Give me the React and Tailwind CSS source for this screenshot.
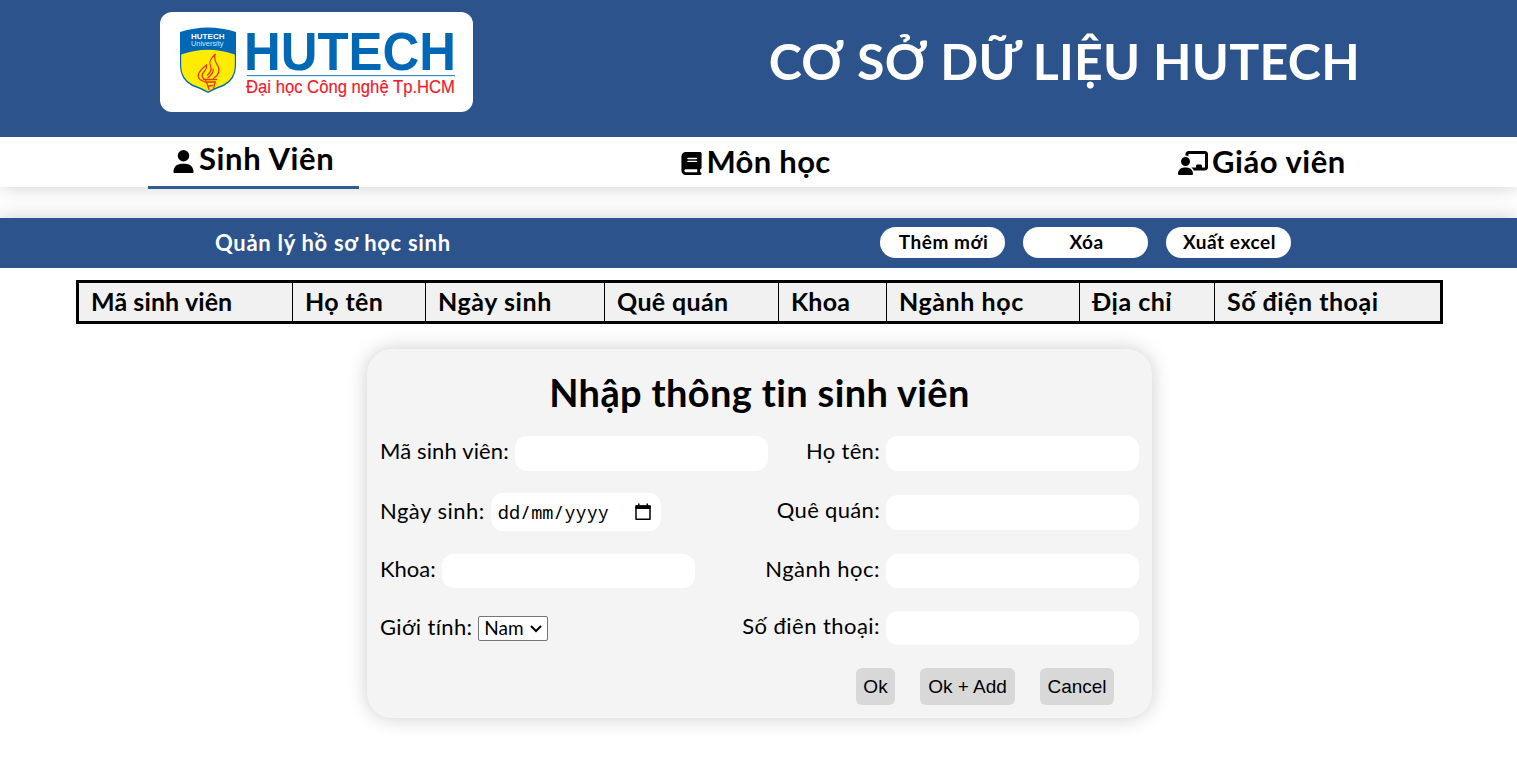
import { FaUser, FaBook, FaChalkboardUser } from "react-icons/fa6";

const columns = [
  { label: "Mã sinh viên", style: "w-[214px] tracking-[0.1px]" },
  { label: "Họ tên", style: "w-[133px] tracking-[0.4px]" },
  { label: "Ngày sinh", style: "w-[179px] tracking-[0.6px]" },
  { label: "Quê quán", style: "w-[174px] tracking-[0.35px]" },
  { label: "Khoa", style: "w-[108px] tracking-[0.2px]" },
  { label: "Ngành học", style: "w-[193px] tracking-[0.6px]" },
  { label: "Địa chỉ", style: "w-[135px] tracking-[0.5px]" },
  { label: "Số điện thoại", style: "w-[226px] tracking-[0.5px]" },
];

function Logo() {
  return (
    <svg width="313" height="100" viewBox="0 0 313 100" className="block">
      <path d="M20 20Q34 15.5 48 15.5T76 20V54Q76 67 64 74Q55 77 48 81Q41 77 32 74Q20 67 20 54Z" fill="#0068b5" />
      <path d="M21.2 42.500Q48 33 74.800 42.500V54Q74.800 66 63.500 72.600Q54 76 48 79.500Q42 76 32.500 72.600Q21.200 66 21.200 54Z" fill="#ffec00" />
      <text x="31" y="26.500" textLength="33.500" lengthAdjust="spacingAndGlyphs" fontFamily="Liberation Sans, sans-serif" fontWeight="700" fontSize="7.500" fill="#fff">HUTECH</text>
      <text x="31" y="34" textLength="32.500" lengthAdjust="spacingAndGlyphs" fontFamily="Liberation Sans, sans-serif" fontSize="7" fill="#d5e5f2">University</text>
      <g fill="none" stroke="#e8361c" strokeWidth="1.300" strokeLinecap="round" strokeLinejoin="round">
        <path d="M55 42.500C50 47 48.500 50 50.500 54C52.500 58 50 61 47.500 63" />
        <path d="M55 42.500C53.500 48 56 50.500 58 54C60.500 59 58 63.500 53.500 66.500" />
        <path d="M46.500 53C47.500 57 44 59 42.500 62C41 65 43.500 67 46 68.500" />
        <path d="M46.500 53C41 57 38 60.500 38.300 64.500C38.500 67 41 68.500 44 69.500" />
        <path d="M53 57C54.500 60.500 51 63 48 65.500" />
        <path d="M43.500 67.500H56.500M45 70H55.500M46.500 70L49 77.500M55 70L53.500 77M49 74L52.500 73.500" />
      </g>
      <text x="84" y="57.500" textLength="212" lengthAdjust="spacingAndGlyphs" fontFamily="Liberation Sans, sans-serif" fontWeight="700" fontSize="54" fill="#0068b5">HUTECH</text>
      <rect x="87" y="63" width="208" height="1.200" fill="#3b8ac6" />
      <text x="86" y="81" textLength="209" lengthAdjust="spacingAndGlyphs" fontFamily="Liberation Sans, sans-serif" fontSize="17.600" fill="#ed1c2e" stroke="#ed1c2e" strokeWidth="0.200">Đại học Công nghệ Tp.HCM</text>
    </svg>
  );
}

function Field({ label, tracking, height = "h-[35px]", lift = "-top-[3px]" }) {
  return (
    <label className="flex items-center gap-[6px] whitespace-nowrap">
      <span className={`relative ${lift} ${tracking}`}>{label}</span>
      <input type="text" className={`w-[253px] rounded-[12px] bg-white ${height}`} />
    </label>
  );
}

export default function App() {
  return (
    <div className="h-[763px] overflow-hidden bg-white font-['Lato','Noto_Sans',sans-serif] text-black [font-variant-ligatures:none]">
      <header className="relative z-10 flex h-[137px] items-start justify-between bg-[#2c538b] px-[160px] pt-3">
        <div className="h-[100px] w-[313px] rounded-xl bg-white"><Logo /></div>
        <h1 className="-mr-[3px] mt-[17px] text-[50px] leading-[64px] font-bold tracking-[0.3px] whitespace-nowrap text-white">CƠ SỞ DỮ LIỆU HUTECH</h1>
      </header>
      <nav className="flex h-[50px] items-start justify-between pr-[147px] pl-[148px] text-[31px] leading-[46px] font-bold shadow-[0_0_20px_rgba(0,0,0,0.2)]">
        <a className="flex h-[52px] w-[211px] items-start border-b-[3px] border-[#345c94] pl-[24px] tracking-[0.65px]">
          <FaUser className="mt-[13px] mr-1 size-[23px]" /><span className="-mt-[2px]">Sinh Viên</span>
        </a>
        <a className="flex w-[199px] items-start pl-[23px] tracking-[0.3px]"><FaBook className="mt-[15px] mr-1 size-[23px]" /><span className="mt-px">Môn học</span></a>
        <a className="flex w-[217px] items-start pl-[25px] tracking-[0.55px]"><FaChalkboardUser className="mt-[11px] mr-1 size-[30px]" /><span className="mt-px">Giáo viên</span></a>
      </nav>
      <section className="mt-[31px] flex h-[50px] items-start bg-[#2c538b] pl-[215px] shadow-[0_0_20px_rgba(0,0,0,0.2)]">
        <h2 className="w-[665px] text-[22px] leading-[49px] font-bold tracking-[0.7px] text-white">Quản lý hồ sơ học sinh</h2>
        <div className="mt-[9px] flex gap-[18px] text-[19px] leading-[29px] font-bold tracking-[0.55px]">
          <button className="h-[31px] w-[125px] rounded-[16px] bg-white pb-[2px] pl-[2px]">Thêm mới</button>
          <button className="h-[31px] w-[125px] rounded-[16px] bg-white pb-[2px] pl-[2px]">Xóa</button>
          <button className="h-[31px] w-[125px] rounded-[16px] bg-white pb-[2px] pl-[2px]">Xuất excel</button>
        </div>
      </section>
      <main className="relative bg-white pt-3">
        <div className="ml-[76px] flex h-[44px] w-[1367px] border-[3px] border-black bg-[#f1f1f1] text-[25px] leading-[36px] font-bold whitespace-nowrap">
          {columns.map((c) => (
            <div key={c.label} className={`${c.style} shrink-0 border-r border-black pl-[12px] last:shrink last:border-r-0`}>{c.label}</div>
          ))}
        </div>
        <form className="mt-[25px] ml-[367px] h-[369px] w-[785px] rounded-[25px] bg-[#f4f4f4] px-[13px] pt-[18px] text-[22px] leading-[30px] shadow-[0_0_20px_rgba(0,0,0,0.2)]">
          <h2 className="mb-[19px] text-center text-[38px] leading-[50px] font-bold tracking-[0.35px]">Nhập thông tin sinh viên</h2>
          <div className="flex h-[209px]">
            <div className="flex w-[361px] shrink-0 flex-col items-start">
              <div className="h-[57px]"><Field label="Mã sinh viên:" tracking="tracking-[0.13px]" /></div>
              <label className="flex h-[61px] items-start gap-[6px] whitespace-nowrap">
                <span className="mt-[3px] tracking-[0.5px]">Ngày sinh:</span>
                <span className="flex h-[38px] w-[170px] items-center justify-between rounded-[12px] bg-white pr-[10px] pl-[7px]">
                  <span className="font-['Noto_Sans_Mono','DejaVu_Sans_Mono',monospace] text-[18.500px]">dd/mm/yyyy</span>
                  <svg width="16" height="18" viewBox="0 0 16 18"><path d="M1 3h14v13.200H1z" fill="none" stroke="#000" strokeWidth="1.500" strokeLinejoin="round" /><path d="M.5 2.500h15V6H.5zM3 .5h1.500v3H3zM11.500.5H13v3h-1.500z" /></svg>
                </span>
              </label>
              <div className="h-[62px]"><Field label="Khoa:" tracking="tracking-normal" height="h-[34px]" lift="-top-[2px]" /></div>
              <label className="flex h-[25px] items-center gap-[6px] whitespace-nowrap">
                <span className="relative -top-[2px] tracking-[0.35px]">Giới tính:</span>
                <span className="flex h-[25px] w-[70px] items-center justify-between rounded-[2px] border border-[#767676] bg-white px-[5px] text-[19px]">
                  <span className="relative -top-px">Nam</span>
                  <svg width="12" height="8" viewBox="0 0 12 8"><path d="M1 1l5 5 5-5" fill="none" stroke="#000" strokeWidth="2" /></svg>
                </span>
              </label>
            </div>
            <div className="flex w-[398px] shrink-0 flex-col items-end gap-[24px]">
              <Field label="Họ tên:" tracking="tracking-[0.3px]" />
              <Field label="Quê quán:" tracking="tracking-[0.33px]" />
              <div className="-mb-px"><Field label="Ngành học:" tracking="tracking-[0.5px]" height="h-[34px]" lift="-top-[2px]" /></div>
              <Field label="Số điên thoại:" tracking="tracking-[0.45px]" height="h-[34px]" lift="-top-[2px]" />
            </div>
          </div>
          <div className="mt-[23px] mr-[25px] flex justify-end gap-[25px] font-['Liberation_Sans',sans-serif] text-[19px]">
            <button type="button" className="h-[37px] w-[39px] rounded-[6px] bg-[#d8d8d8]">Ok</button>
            <button type="button" className="h-[37px] w-[95px] rounded-[6px] bg-[#d8d8d8]">Ok + Add</button>
            <button type="button" className="h-[37px] w-[74px] rounded-[6px] bg-[#d8d8d8]">Cancel</button>
          </div>
        </form>
      </main>
    </div>
  );
}
